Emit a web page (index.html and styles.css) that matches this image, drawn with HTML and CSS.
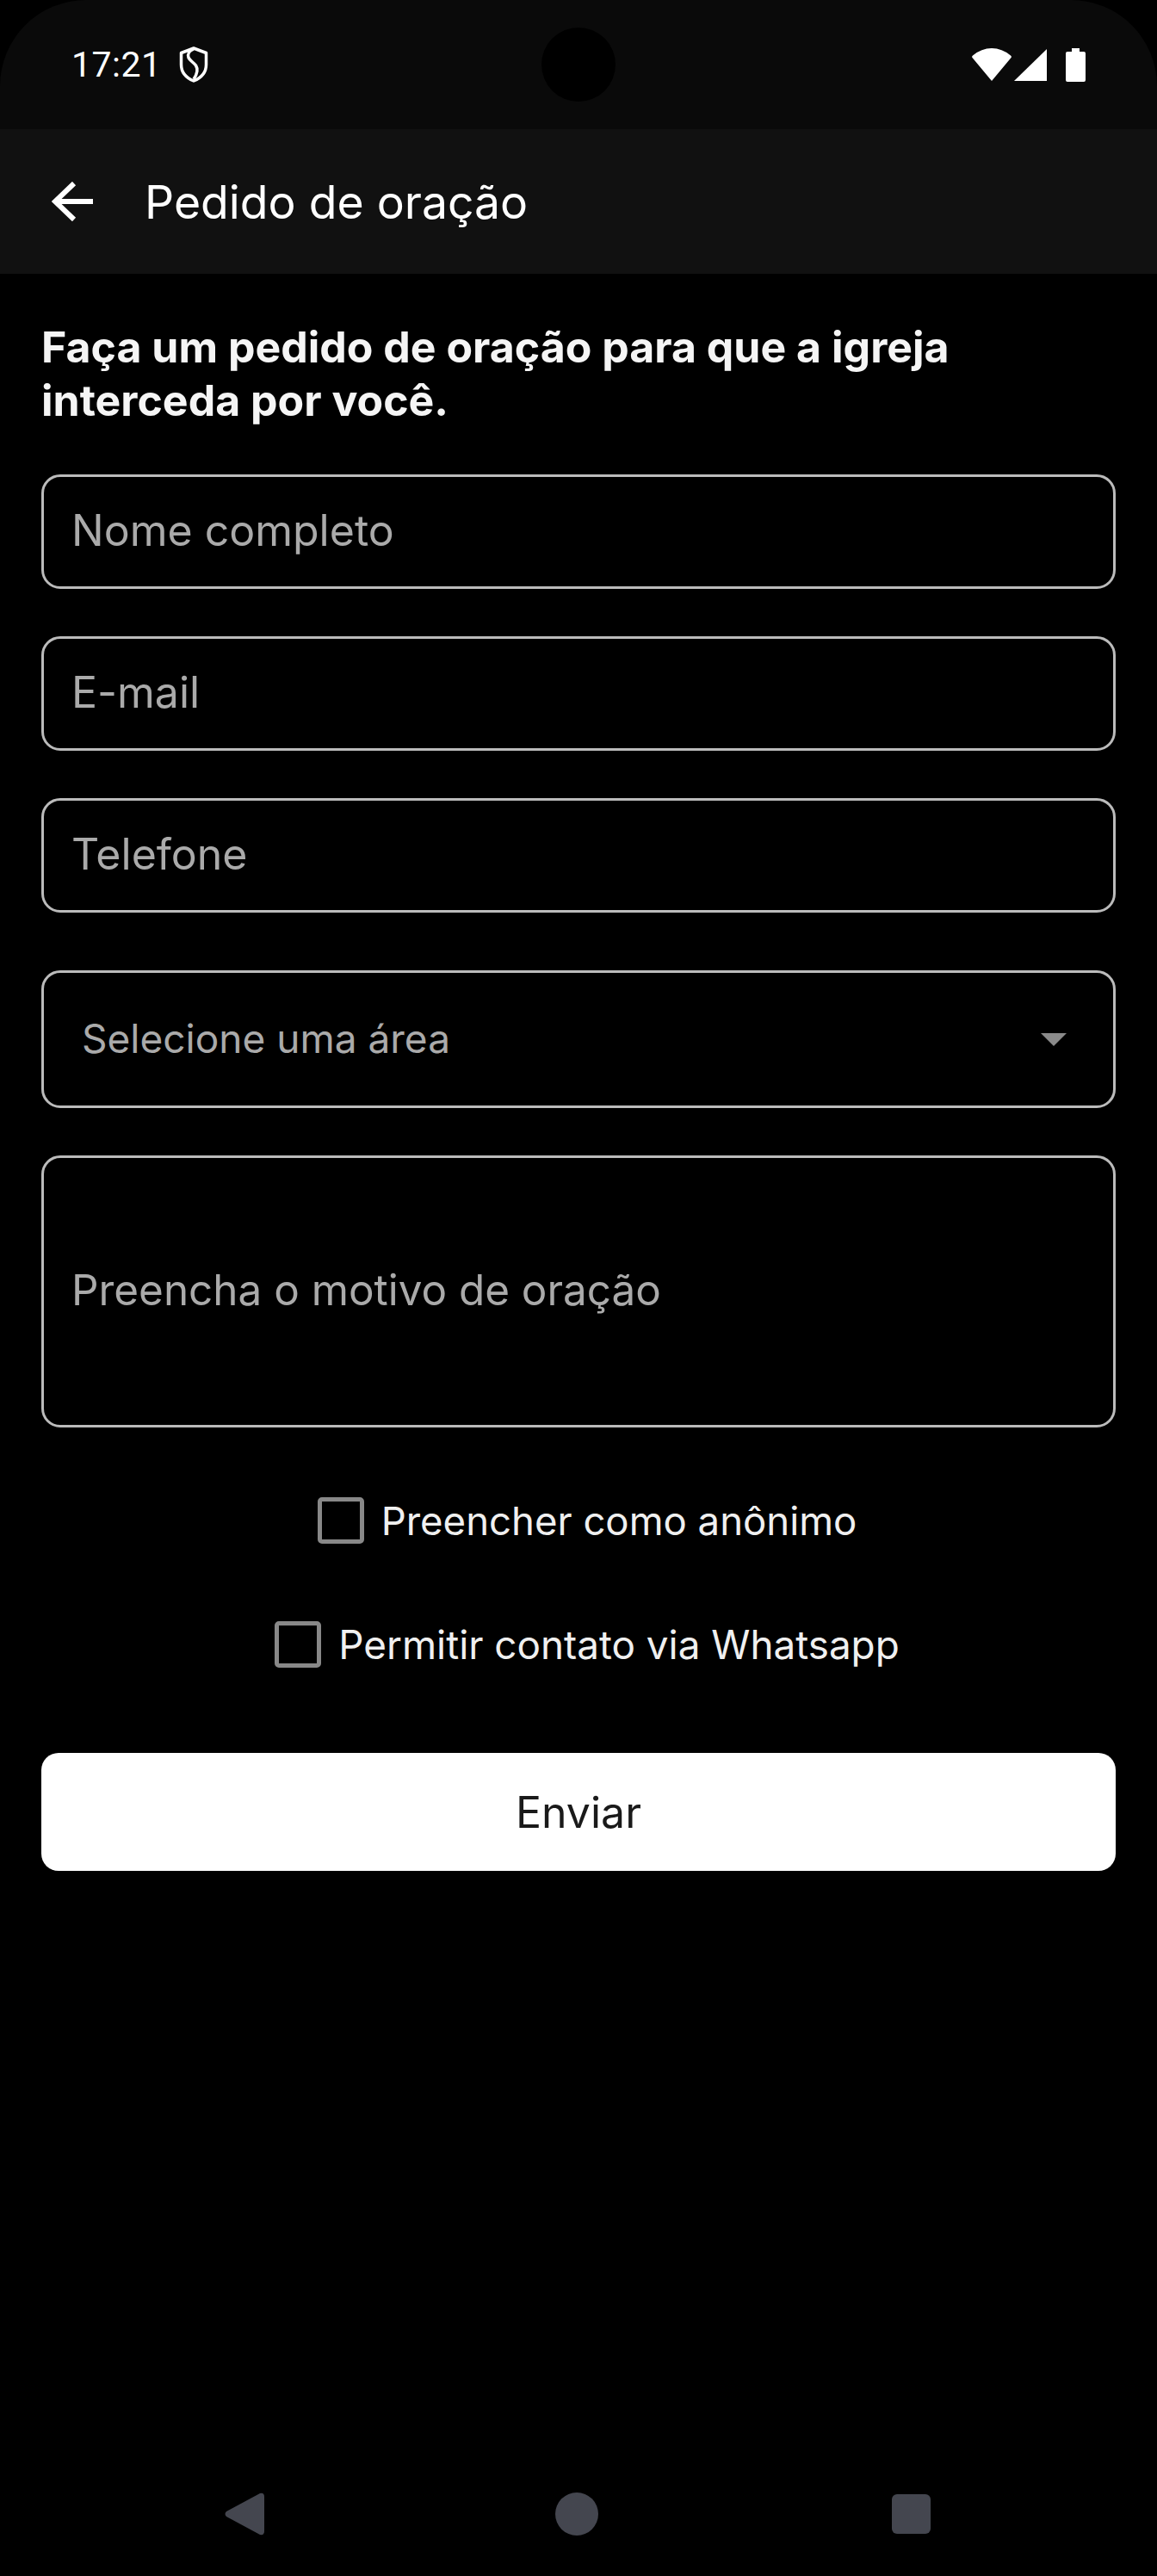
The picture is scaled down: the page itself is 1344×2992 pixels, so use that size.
FILE: index.html
```html
<!DOCTYPE html>
<html>
<head>
  <meta charset="UTF-8">
  <title>Pedido de oração</title>
  <link rel="stylesheet" href="styles.css">
</head>
<body>
  <div class="status">
    <div class="status-left">
      <span class="clock">17:21</span>
      <svg width="34" height="42" viewBox="0 0 34 42"><path d="M17 2 2.500 7.500V21c0 9 6 15.500 14.500 19 8.500-3.500 14.500-10 14.500-19V7.500z" fill="none" stroke="#fff" stroke-width="3.500" stroke-linejoin="round"/><path d="M17 3c-5 2-7.500 6-6 10 1.500 3.500 6 5.500 8.500 9 2.500 4 1.500 10-2.500 16" fill="none" stroke="#fff" stroke-width="3.500"/></svg>
    </div>
    <div class="camera"></div>
    <div class="status-right">
      <svg class="wifi" width="46" height="38" viewBox="0 0 46 38"><path d="M23 38 .5 11Q-.5 9.500 1 8.500 11 0 23 0t22 8.500q1.500 1 .5 2.500z" fill="#fff"/></svg>
      <svg class="signal" width="38" height="37" viewBox="0 0 38 37"><path d="M38 0v37H0z" fill="#fff"/></svg>
      <svg class="battery" width="23" height="39" viewBox="0 0 23 39"><path d="M7 0h9v4h5q2 0 2 2v31q0 2-2 2H2q-2 0-2-2V6q0-2 2-2h5z" fill="#fff"/></svg>
    </div>
  </div>

  <header class="topbar">
    <svg width="48" height="46" viewBox="0 0 48 46"><path d="M48 23H4M26 2 4 23l22 21" fill="none" stroke="#fff" stroke-width="6"/></svg>
    <h1>Pedido de oração</h1>
  </header>

  <main class="content">
    <h2>Faça um pedido de oração para que a igreja interceda por você.</h2>
    <form class="form">
      <div class="field">Nome completo</div>
      <div class="field">E-mail</div>
      <div class="field">Telefone</div>
      <div class="field select">
        <span>Selecione uma área</span>
        <svg width="30" height="15" viewBox="0 0 30 15"><path d="M0 0h30L15 15z" fill="#8a8a8a"/></svg>
      </div>
      <div class="field textarea">Preencha o motivo de oração</div>
      <div class="check first"><span class="box"></span>Preencher como anônimo</div>
      <div class="check second"><span class="box"></span>Permitir contato via Whatsapp</div>
      <button type="button" class="send">Enviar</button>
    </form>
  </main>

  <nav class="navbar">
    <svg width="46" height="50" viewBox="0 0 46 50"><path d="M46 5v40q0 5-5 4L2 28q-3-3 0-6L41 1q5-1 5 4z" fill="#44464f"/></svg>
    <svg class="nav-home" width="50" height="50" viewBox="0 0 50 50"><circle cx="25" cy="25" r="25" fill="#44464f"/></svg>
    <svg class="nav-recent" width="45" height="46" viewBox="0 0 45 46"><rect width="45" height="46" rx="6" fill="#44464f"/></svg>
  </nav>
</body>
</html>
```

FILE: styles.css
```css
* { box-sizing: border-box; }
body {
  margin: 0;
  height: 2992px;
  background: #000;
  color: #fff;
  font-family: Inter, "Noto Sans", sans-serif;
  display: flex;
  flex-direction: column;
}
.status {
  height: 150px;
  background: #0a0a0a;
  border-radius: 100px 100px 0 0;
  padding: 0 83px 0 83px;
  display: flex;
  align-items: center;
  justify-content: space-between;
  position: relative;
}
.status-left { display: flex; align-items: center; gap: 20px; }
.clock { font-family: Roboto, sans-serif; font-size: 41px; letter-spacing: 0.5px; }
.camera {
  position: absolute;
  left: 629px;
  top: 32px;
  width: 86px;
  height: 86px;
  border-radius: 50%;
  background: #000;
}
.status-right { display: flex; align-items: center; }
.signal { margin-left: 3px; }
.battery { margin-left: 22px; }
.topbar {
  height: 168px;
  background: #111;
  display: flex;
  align-items: center;
  padding-left: 60px;
  gap: 60px;
}
.topbar h1 { margin: 0; font-size: 53.5px; font-weight: 400; }
.content { flex: 1; padding: 0 48px; }
.content h2 {
  margin: 54px 0 0;
  font-size: 50px;
  line-height: 62px;
  font-weight: 700;
  color: #f5f5f5;
}
.form { display: flex; flex-direction: column; margin-top: 55px; }
.field {
  height: 133px;
  border: 3px solid #bbb;
  border-radius: 22px;
  margin-bottom: 55px;
  padding: 0 0 4px 32px;
  display: flex;
  align-items: center;
  font-size: 50px;
  color: #aaa;
}
.select {
  height: 160px;
  margin-top: 12px;
  padding: 0 54px 3px 44px;
  justify-content: space-between;
  font-size: 46px;
}
.select svg { margin-top: 3px; }
.textarea { height: 316px; margin-bottom: 81px; font-size: 49.4px; }
.check {
  display: flex;
  align-items: center;
  justify-content: center;
  gap: 20px;
  height: 54px;
  padding-left: 20px;
  font-size: 45.5px;
  color: #f0f0f0;
}
.second { margin-top: 90px; font-size: 45.8px; }
.box {
  width: 54px;
  height: 54px;
  border: 5px solid #888;
  border-radius: 5px;
}
.send {
  margin-top: 99px;
  height: 137px;
  border: 0;
  border-radius: 20px;
  background: #fff;
  color: #1a1a1a;
  font: 400 50px Inter, "Noto Sans", sans-serif;
}
.navbar {
  height: 144px;
  padding-left: 261px;
  display: flex;
  align-items: center;
}
.nav-home { margin-left: 338px; }
.nav-recent { margin-left: 341px; }
```
